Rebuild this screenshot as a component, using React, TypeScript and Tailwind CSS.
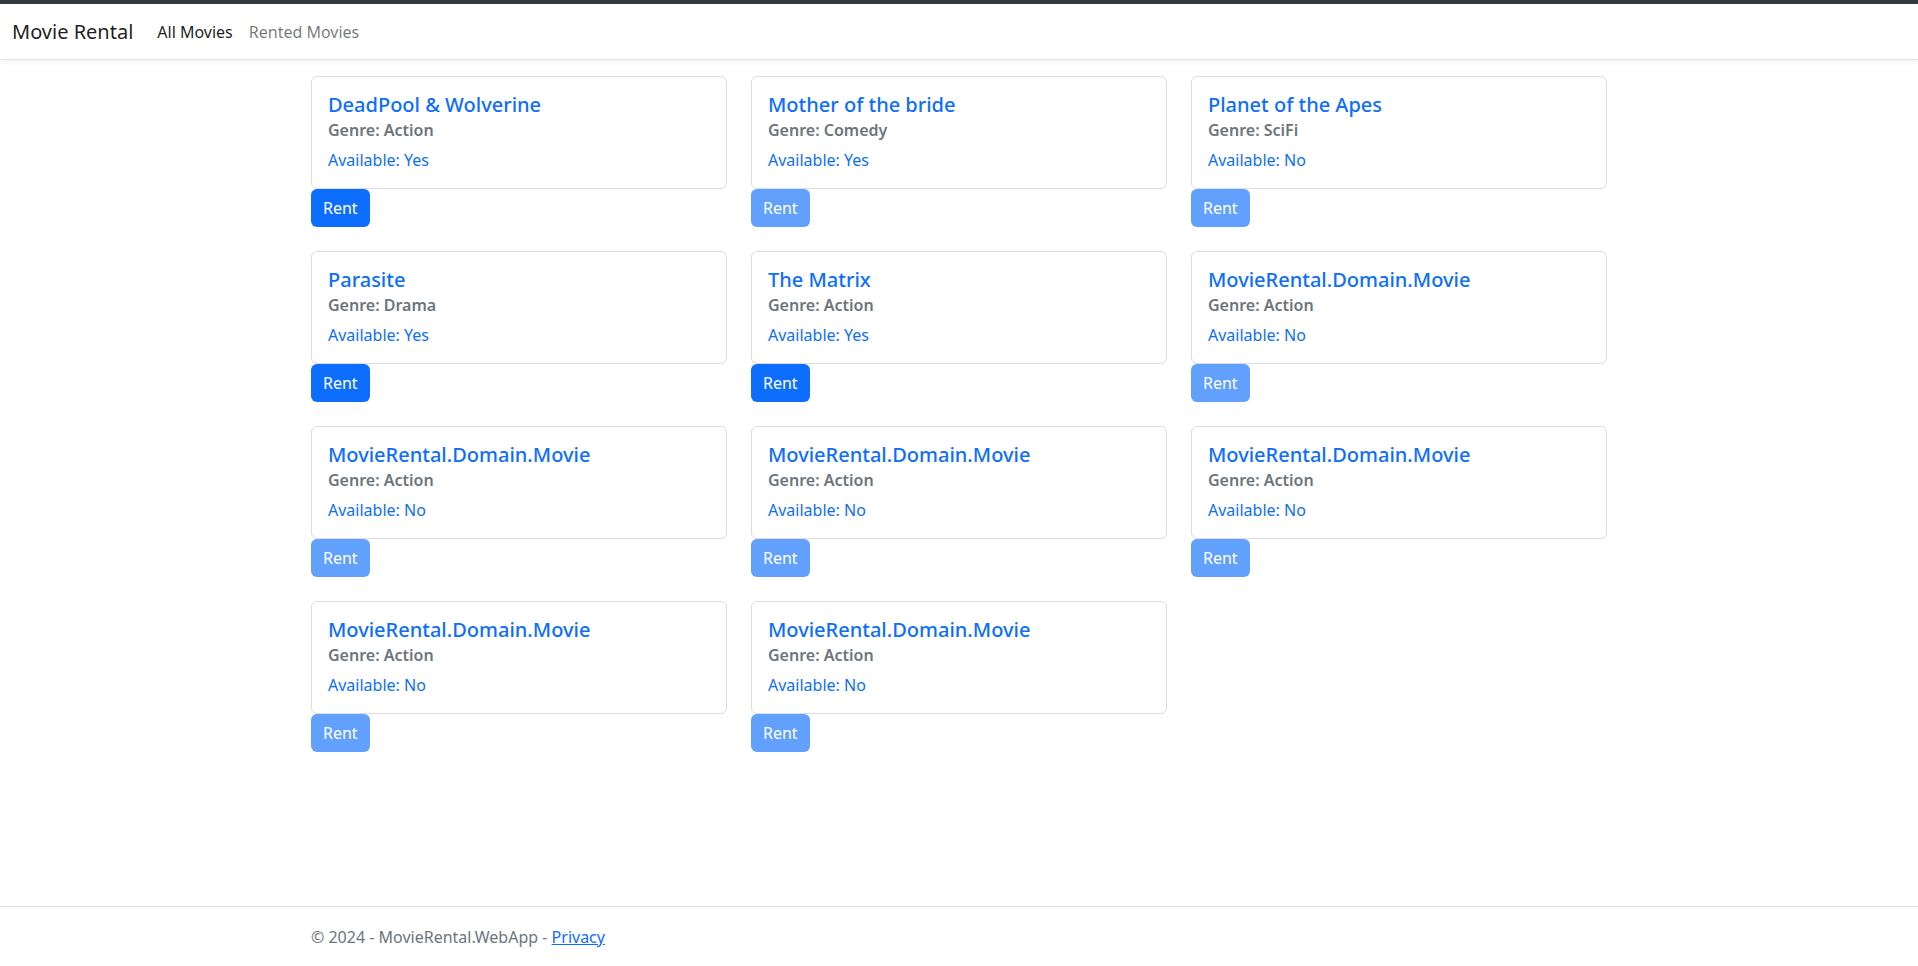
type Movie = {
  title: string;
  genre: string;
  available: boolean;
  canRent: boolean;
};

const movies: Movie[] = [
  { title: "DeadPool & Wolverine", genre: "Action", available: true, canRent: true },
  { title: "Mother of the bride", genre: "Comedy", available: true, canRent: false },
  { title: "Planet of the Apes", genre: "SciFi", available: false, canRent: false },
  { title: "Parasite", genre: "Drama", available: true, canRent: true },
  { title: "The Matrix", genre: "Action", available: true, canRent: true },
  { title: "MovieRental.Domain.Movie", genre: "Action", available: false, canRent: false },
  { title: "MovieRental.Domain.Movie", genre: "Action", available: false, canRent: false },
  { title: "MovieRental.Domain.Movie", genre: "Action", available: false, canRent: false },
  { title: "MovieRental.Domain.Movie", genre: "Action", available: false, canRent: false },
  { title: "MovieRental.Domain.Movie", genre: "Action", available: false, canRent: false },
  { title: "MovieRental.Domain.Movie", genre: "Action", available: false, canRent: false },
];

const MovieCard = ({ title, genre, available, canRent }: Movie) => {
  return (
    <div className="mb-6">
      <div className="rounded-md border border-[#dcdcdc] bg-white p-4">
        <h5 className="text-[20px] leading-[24px] font-medium text-[#0d6efd]">{title}</h5>
        <h6 className="mt-1 text-[16px] leading-[19px] font-semibold text-[#6c757d]">
          Genre: {genre}
        </h6>
        <p className="mt-2 text-[16px] leading-[24px] text-[#0d6efd]">
          Available: {available ? "Yes" : "No"}
        </p>
      </div>
      <button
        disabled={!canRent}
        className={
          canRent
            ? "h-[38px] rounded-md bg-[#0d6efd] px-3 text-[16px] text-white"
            : "h-[38px] rounded-md bg-[#0d6efd] px-3 text-[16px] text-white opacity-65"
        }
      >
        Rent
      </button>
    </div>
  );
};

export default function App() {
  return (
    <div className="flex min-h-screen flex-col bg-white font-['Segoe_UI','Noto_Sans',sans-serif] text-[16px] text-[#212529]">
      <header className="border-t-4 border-[#343a40]">
        <nav className="flex h-[56px] items-center border-b border-[#e3e3e3] px-3 shadow-[0_2px_6px_rgba(0,0,0,0.06)]">
          <span className="mr-4 text-[20px] text-black/90">Movie Rental</span>
          <a className="px-2 text-[16px] text-black/90">All Movies</a>
          <a className="px-2 text-[16px] text-black/55">Rented Movies</a>
        </nav>
      </header>

      <main className="mx-auto mt-4 w-[1320px] px-3">
        <div className="grid grid-cols-3 gap-x-6">
          {movies.map((m, i) => (
            <MovieCard key={i} {...m} />
          ))}
        </div>
      </main>

      <footer className="mt-auto h-[60px] border-t border-[#dee2e6] leading-[60px] text-[#6c757d]">
        <div className="mx-auto w-[1320px] px-3 text-[16px]">
          © 2024 - MovieRental.WebApp -{" "}
          <a className="text-[#0d6efd] underline">Privacy</a>
        </div>
      </footer>
    </div>
  );
}
